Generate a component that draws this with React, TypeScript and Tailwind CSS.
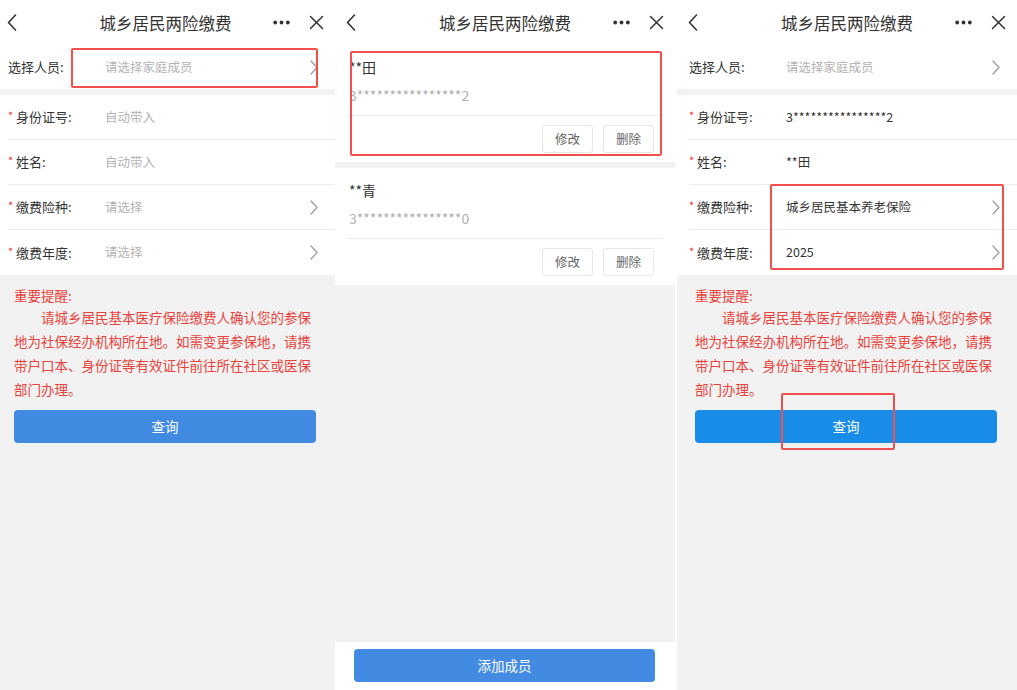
const FONT = "font-['Noto_Sans_CJK_SC','Noto_Sans',sans-serif]";

function BackIcon() {
  return (
    <svg width="10" height="17" viewBox="0 0 10 17" fill="none">
      <path d="M8.5 1L1.5 8.5l7 7.5" stroke="#333" strokeWidth="1.6" strokeLinecap="round" strokeLinejoin="round" />
    </svg>
  );
}

function DotsIcon() {
  return (
    <svg width="17" height="5" viewBox="0 0 17 5">
      <circle cx="2.2" cy="2.5" r="1.9" fill="#333" />
      <circle cx="8.5" cy="2.5" r="1.9" fill="#333" />
      <circle cx="14.8" cy="2.5" r="1.9" fill="#333" />
    </svg>
  );
}

function CloseIcon() {
  return (
    <svg width="15" height="15" viewBox="0 0 15 15" fill="none">
      <path d="M1.5 1.5l12 12M13.5 1.5l-12 12" stroke="#333" strokeWidth="1.5" strokeLinecap="round" />
    </svg>
  );
}

function Chevron() {
  return (
    <svg width="8" height="15" viewBox="0 0 8 15" fill="none">
      <path d="M1 1l6 6.5L1 14" stroke="#999" strokeWidth="1.2" strokeLinecap="round" strokeLinejoin="round" />
    </svg>
  );
}

function TopBar() {
  return (
    <div className="h-[45px] shrink-0 bg-white grid grid-cols-[1fr_auto_1fr] items-center px-[11px]">
      <div className="flex items-center">
        <BackIcon />
      </div>
      <div className="text-[16.5px] leading-[24px] text-[#333]">城乡居民两险缴费</div>
      <div className="flex items-center justify-end gap-[19px]">
        <DotsIcon />
        <CloseIcon />
      </div>
    </div>
  );
}

interface RowProps {
  label: string;
  value: string;
  required?: boolean;
  chevron?: boolean;
  filled?: boolean;
  divider?: boolean;
  height?: string;
}

function Row({ label, value, required, chevron, filled, divider = true, height = 'h-[45px]' }: RowProps) {
  return (
    <div className={`${height} ml-[12px] pr-[17px] flex items-center ${divider ? 'border-b border-[#ececec]' : ''}`}>
      <div className="w-[97px] shrink-0 flex items-center text-[13px] text-[#333]">
        {required && <span className="w-[8px] text-[#f2302b] text-[11px] leading-[13px] -mt-[3px]">*</span>}
        <span>{label}</span>
      </div>
      <div className={`flex-1 text-[12.5px] ${filled ? 'text-[#333]' : 'text-[#b3b3b3]'}`}>{value}</div>
      {chevron && <Chevron />}
    </div>
  );
}

function Notice({ btnColor }: { btnColor: string }) {
  return (
    <div className="flex-1 bg-[#f2f2f2] pt-[10px]">
      <div className="mx-[18px] w-[302px] text-[#e8423b] text-[13.5px]">
        <div className="leading-[20px]">重要提醒:</div>
        <p className="leading-[24px] indent-[2em]">
          请城乡居民基本医疗保险缴费人确认您的参保地为社保经办机构所在地。如需变更参保地，请携带户口本、身份证等有效证件前往所在社区或医保部门办理。
        </p>
      </div>
      <button className={`mt-[9px] mx-[18px] w-[302px] h-[33px] rounded-[4px] ${btnColor} text-white text-[13.5px]`}>
        查询
      </button>
    </div>
  );
}

function Mark({ className }: { className: string }) {
  return <div className={`absolute border-2 border-[#f24f4f] rounded-[2px] ${className}`} />;
}

function MemberCard({ name, id }: { name: string; id: string }) {
  return (
    <div className="bg-white px-[12px] pt-[12px] pb-[9px]">
      <div className="pl-[2px] text-[14px] leading-[20px] text-[#333]">{name}</div>
      <div className="pl-[2px] mt-[8px] text-[14px] leading-[20px] text-[#b0b0b0]">{id}</div>
      <div className="mt-[10px] border-t border-[#ececec]" />
      <div className="mt-[9px] pr-[9px] flex justify-end gap-[10px]">
        <button className="w-[51px] h-[28px] border border-[#e6e6e6] rounded-[3px] text-[12.5px] text-[#666]">修改</button>
        <button className="w-[51px] h-[28px] border border-[#e6e6e6] rounded-[3px] text-[12.5px] text-[#666]">删除</button>
      </div>
    </div>
  );
}

export default function App() {
  return (
    <div className={`w-[1017px] h-[690px] flex bg-white overflow-hidden ${FONT}`}>
      {/* screen 1 — empty form */}
      <div className="w-[335px] h-[690px] shrink-0 overflow-hidden">
        <div className="relative -ml-[4px] w-[339px] h-[690px] flex flex-col">
          <TopBar />
          <div className="bg-white">
            <Row label="选择人员:" value="请选择家庭成员" chevron divider={false} height="h-[44px]" />
          </div>
          <div className="h-[6px] bg-[#f2f2f2]" />
          <div className="bg-white">
            <Row label="身份证号:" value="自动带入" required />
            <Row label="姓名:" value="自动带入" required />
            <Row label="缴费险种:" value="请选择" required chevron />
            <Row label="缴费年度:" value="请选择" required chevron divider={false} />
          </div>
          <Notice btnColor="bg-[#418ae2]" />
          <Mark className="left-[75px] top-[48px] w-[247px] h-[40px]" />
        </div>
      </div>

      {/* screen 2 — family members */}
      <div className="relative w-[340px] h-[690px] shrink-0 flex flex-col">
        <TopBar />
        <MemberCard name="**田" id="3****************2" />
        <div className="h-[6px] bg-[#f2f2f2]" />
        <MemberCard name="**青" id="3****************0" />
        <div className="flex-1 bg-[#f2f2f2]" />
        <div className="h-[48px] bg-white pt-[7px] pl-[19px]">
          <button className="w-[301px] h-[33px] rounded-[4px] bg-[#438be2] text-white text-[13.5px]">添加成员</button>
        </div>
        <Mark className="left-[15px] top-[51px] w-[312px] h-[105px]" />
      </div>

      <div className="w-[2px] shrink-0 bg-white" />

      {/* screen 3 — filled form */}
      <div className="relative w-[340px] h-[690px] shrink-0 flex flex-col">
        <TopBar />
        <div className="bg-white">
          <Row label="选择人员:" value="请选择家庭成员" chevron divider={false} height="h-[44px]" />
        </div>
        <div className="h-[6px] bg-[#f2f2f2]" />
        <div className="bg-white">
          <Row label="身份证号:" value="3****************2" required filled />
          <Row label="姓名:" value="**田" required filled />
          <Row label="缴费险种:" value="城乡居民基本养老保险" required chevron filled />
          <Row label="缴费年度:" value="2025" required chevron filled divider={false} />
        </div>
        <Notice btnColor="bg-[#198ce8]" />
        <Mark className="left-[93px] top-[184px] w-[234px] h-[86px]" />
        <Mark className="left-[104px] top-[393px] w-[114px] h-[57px]" />
      </div>
    </div>
  );
}
